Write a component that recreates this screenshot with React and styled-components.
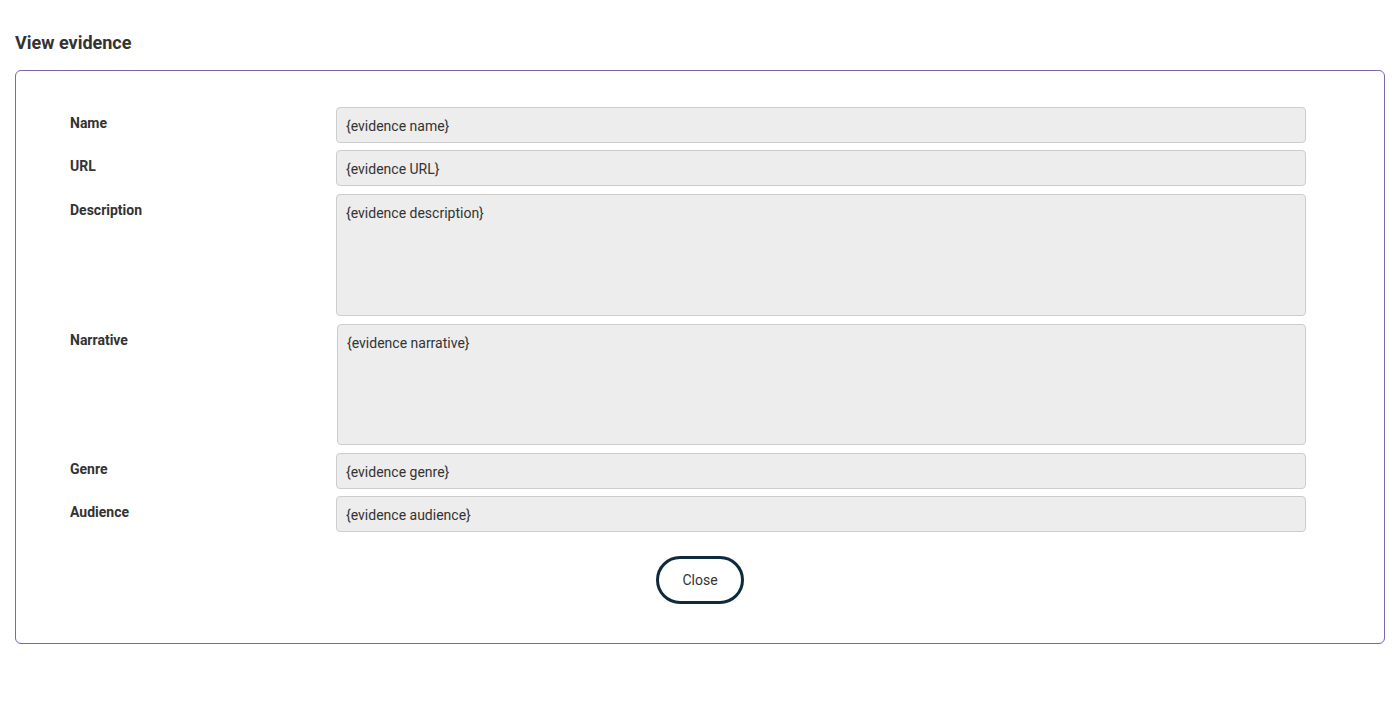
import React from "react";
import styled, { createGlobalStyle } from "styled-components";

const Global = createGlobalStyle`
  html, body { margin: 0; padding: 0; background: #fff; }
  body { font-family: Roboto, "Liberation Sans", Arial, sans-serif; color: #333; }
  * { box-sizing: border-box; }
`;

const Page = styled.div`
  padding: 30px 15px 0 15px;
`;

const Title = styled.h1`
  margin: 0 0 14px 0;
  font-size: 18px;
  line-height: 26px;
  font-weight: 700;
  color: #333;
`;

const Panel = styled.div`
  border: 1px solid #7d63b0;
  border-radius: 6px;
  padding: 36px 78px 39px 54px;
`;

const Form = styled.div`
  display: grid;
  grid-template-columns: 266px 1fr;
  row-gap: 7px;
`;

const Row = styled.div`
  display: contents;
`;

const Label = styled.label`
  font-size: 14px;
  font-weight: 700;
  line-height: 20px;
  padding-top: ${(p) => 6 + p.$offset}px;
  color: #333;
`;

const Field = styled.div`
  background: #ededed;
  border: 1px solid #cdcdcd;
  border-radius: 4px;
  font-size: 14px;
  line-height: 20px;
  color: #333;
  padding: 8px 9px 6px 9px;
  height: ${(p) => p.$height}px;
  margin-top: ${(p) => p.$offset}px;
  margin-left: ${(p) => (p.$shift ? "1px" : "0")};
`;

const Actions = styled.div`
  display: flex;
  justify-content: center;
  margin-top: 24px;
  padding-left: 24px;
`;

const Button = styled.button`
  width: 88px;
  height: 48px;
  border: 3px solid #0f2a3d;
  border-radius: 24px;
  background: #fff;
  font-family: Roboto, "Liberation Sans", Arial, sans-serif;
  font-size: 14px;
  color: #333;
  padding: 0;
  cursor: pointer;
`;

const fields = [
  { label: "Name", value: "{evidence name}", height: 36, offset: 0 },
  { label: "URL", value: "{evidence URL}", height: 36, offset: 0 },
  { label: "Description", value: "{evidence description}", height: 122, offset: 1 },
  { label: "Narrative", value: "{evidence narrative}", height: 121, offset: 1, shift: true },
  { label: "Genre", value: "{evidence genre}", height: 36, offset: 1 },
  { label: "Audience", value: "{evidence audience}", height: 36, offset: 0 },
];

export default function App() {
  return (
    <>
      <Global />
      <Page>
        <Title>View evidence</Title>
        <Panel>
          <Form>
            {fields.map((f) => (
              <Row key={f.label}>
                <Label $offset={f.offset}>{f.label}</Label>
                <Field $height={f.height} $offset={f.offset} $shift={f.shift}>
                  {f.value}
                </Field>
              </Row>
            ))}
          </Form>
          <Actions>
            <Button>Close</Button>
          </Actions>
        </Panel>
      </Page>
    </>
  );
}
